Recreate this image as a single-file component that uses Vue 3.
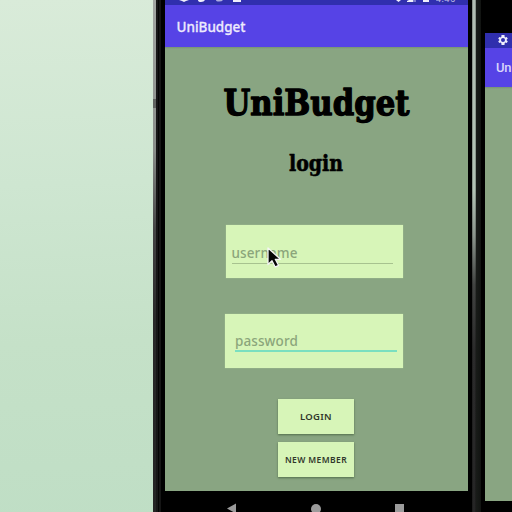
<script setup>
const fields = [
  { id: 'username', label: 'username' },
  { id: 'password', label: 'password' }
]
</script>

<template>
  <main class="stage">
    <div class="rail rail-left"><i class="side-key"></i></div>
    <section class="phone">
      <div class="status">
        <svg width="303" height="5" viewBox="0 0 303 5" fill="#f0f0fc">
          <path d="M14 0h10l-3 1-2 1-2-1z" />
          <path d="M33 0h7q-1 2-4 2t-3-2z" />
          <path d="M51 0h7q-1 1.500-4 1.500T51 0z" opacity=".65" />
          <path d="M68 0h8v2h-8z" />
          <path d="M231 0h5l-2.500 2z" />
          <path d="M242 1l2-1h4v2h-6z" />
          <path d="M248 0h3v2h-3z" opacity=".4" />
          <path d="M258 0h6v2h-6z" />
          <text x="271" y="2" font-size="8.500" textLength="19" opacity=".75">4:46</text>
        </svg>
      </div>
      <header class="appbar">
        <svg width="90" height="41"><text x="11.500" y="26.800" class="bar-title" textLength="69" lengthAdjust="spacingAndGlyphs">UniBudget</text></svg>
      </header>
      <div class="content">
        <svg class="heading" width="303" height="142" role="heading">
          <text x="58.500" y="67.500" class="title" textLength="186" lengthAdjust="spacingAndGlyphs">UniBudget</text>
          <text x="124" y="123.500" class="subtitle" textLength="54" lengthAdjust="spacingAndGlyphs">login</text>
        </svg>
        <div v-for="f in fields" :key="f.id" class="field" :class="f.id">
          <div class="input"><span>{{ f.label }}</span></div>
          <svg v-if="f.id === 'username'" class="cursor" width="18" height="23" viewBox="0 0 18 23">
            <path d="M3 2v16.500l4-3.700 3.200 6.200 3.300-1.700-3.200-6h5.200z" fill="#050505" stroke="#f4f4f4" stroke-width="1.300" stroke-linejoin="round" />
          </svg>
        </div>
        <div class="actions">
          <button class="login">LOGIN</button>
          <button class="member">NEW MEMBER</button>
        </div>
      </div>
      <nav class="navbar">
        <svg width="303" height="21" viewBox="0 0 303 21" fill="#9b9b9b">
          <path d="M62 17.500l9-5v10z" />
          <circle cx="151" cy="18" r="5" />
          <path d="M230 13h9v9h-9z" />
        </svg>
      </nav>
    </section>
    <div class="rail rail-right"></div>
    <section class="neighbor">
      <div class="neighbor-status">
        <svg width="12" height="12" viewBox="0 0 24 24" fill="#eeeefc"><path fill-rule="evenodd" d="M19.400 13c.1-.7.1-1.300 0-2l2.100-1.600-2-3.500-2.500 1c-.5-.4-1.100-.7-1.700-1L15 2H9l-.4 3.900c-.6.3-1.200.6-1.700 1l-2.500-1-2 3.500L4.600 11v2l-2.200 1.600 2 3.500 2.500-1c.5.4 1.100.7 1.700 1L9 22h6l.4-3.900c.6-.3 1.200-.6 1.700-1l2.500 1 2-3.500zM12 16a4 4 0 1 1 0-8 4 4 0 0 1 0 8z" /></svg>
      </div>
      <div class="neighbor-bar">Un</div>
      <div class="neighbor-body"></div>
    </section>
  </main>
</template>

<style>
body { margin: 0; overflow: hidden; }
</style>

<style scoped>
.stage {
  display: flex;
  width: 512px;
  height: 512px;
  padding-left: 153px;
  box-sizing: border-box;
  overflow: hidden;
  background: linear-gradient(178deg, #d9ebd9 0%, #cee6d1 35%, #c5e1c8 65%, #bfdec5 100%);
  font-family: "Noto Sans", "Open Sans", sans-serif;
}
.rail { flex: none; height: 512px; }
.rail-left {
  width: 12px;
  padding-top: 99px;
  box-sizing: border-box;
  background:
    linear-gradient(90deg, #0000 3px, #171717 3px, #171717 5px, #050505 5px, #050505 6px, #151515 6px, #151515 8px, #000 8px),
    linear-gradient(#a2a6a2 0, #898d89 150px, #444 230px, #292929 320px, #242424);
}
.side-key { display: block; width: 3px; height: 9px; background: #606360; }
.rail-right {
  width: 17px;
  background:
    linear-gradient(90deg, #000 4px, #0000 4px, #0000 8px, #191c19 8px, #111311 13px, #000 13px),
    linear-gradient(90deg, #0006 4px, #0000 6px, #0006 8px),
    linear-gradient(#c5d2c7 0, #c5d8c8 190px, #9ba69d 235px, #484a48 285px, #303030 350px, #292929);
}
.phone { flex: none; display: flex; flex-direction: column; width: 303px; background: #000; }
.status { height: 5px; background: #302fae; }
.status svg { display: block; }
.appbar { height: 42px; background: #5643e6; }
.bar-title { font: 500 14.5px "Noto Sans", sans-serif; fill: #edeafd; stroke: #edeafd; stroke-width: .3px; }
.content {
  display: flex;
  flex-direction: column;
  height: 443.5px;
  background: linear-gradient(#779273 0, #89a582 2px);
}
.heading { display: block; flex: none; }
.title { font: bold 36px "DejaVu Serif", serif; fill: #000; stroke: #000; stroke-width: 1.4px; stroke-linejoin: round; }
.subtitle { font: bold 22px "DejaVu Serif", serif; fill: #000; stroke: #000; stroke-width: .6px; stroke-linejoin: round; }
.field {
  position: relative;
  box-sizing: border-box;
  width: 177.5px;
  height: 53.5px;
  background: #d7f5b8;
  box-shadow: 0 0 1px #b8d69c;
}
.username { margin: 35.5px 0 0 60.5px; padding: 17px 10px 14px 6px; }
.password { margin: 36px 0 0 60px; padding: 16px 6px 14px 10px; }
.input {
  height: 21px;
  border-bottom: 1px solid #a7c28f;
  font-size: 13.5px;
  font-weight: 500;
  line-height: 23px;
  letter-spacing: .1px;
  color: #8ba57b;
}
.password .input { height: 20px; border-bottom: 2px solid #7adfc0; }
.cursor { position: absolute; left: 39px; top: 21px; }
.actions { display: flex; flex-direction: column; gap: 8px; margin: 31.5px 0 0 113px; }
.actions button {
  width: 76px;
  height: 35px;
  padding: 0;
  border: 0;
  background: #d7f5b8;
  color: #30372b;
  font: 600 9.5px "Noto Sans", sans-serif;
  letter-spacing: .3px;
  white-space: nowrap;
  box-shadow: 0 1px 2px #526e4b;
}
.actions .member { font-size: 8.5px; letter-spacing: .4px; }
.navbar { flex: 1; overflow: hidden; background: #000; }
.navbar svg { display: block; }
.neighbor {
  flex: none;
  width: 27px;
  height: 512px;
  padding-top: 32.5px;
  box-sizing: border-box;
  overflow: hidden;
  background: #000;
}
.neighbor-status { display: flex; align-items: center; height: 15.5px; padding-left: 12px; background: #302fae; }
.neighbor-bar {
  height: 39px;
  padding-left: 11px;
  font: 500 13px/40px Roboto, sans-serif;
  letter-spacing: -.3px;
  color: #d9d5fb;
  background: #5643e6;
}
.neighbor-body { height: 414px; background: linear-gradient(#779273 0, #89a582 2px); }
</style>
